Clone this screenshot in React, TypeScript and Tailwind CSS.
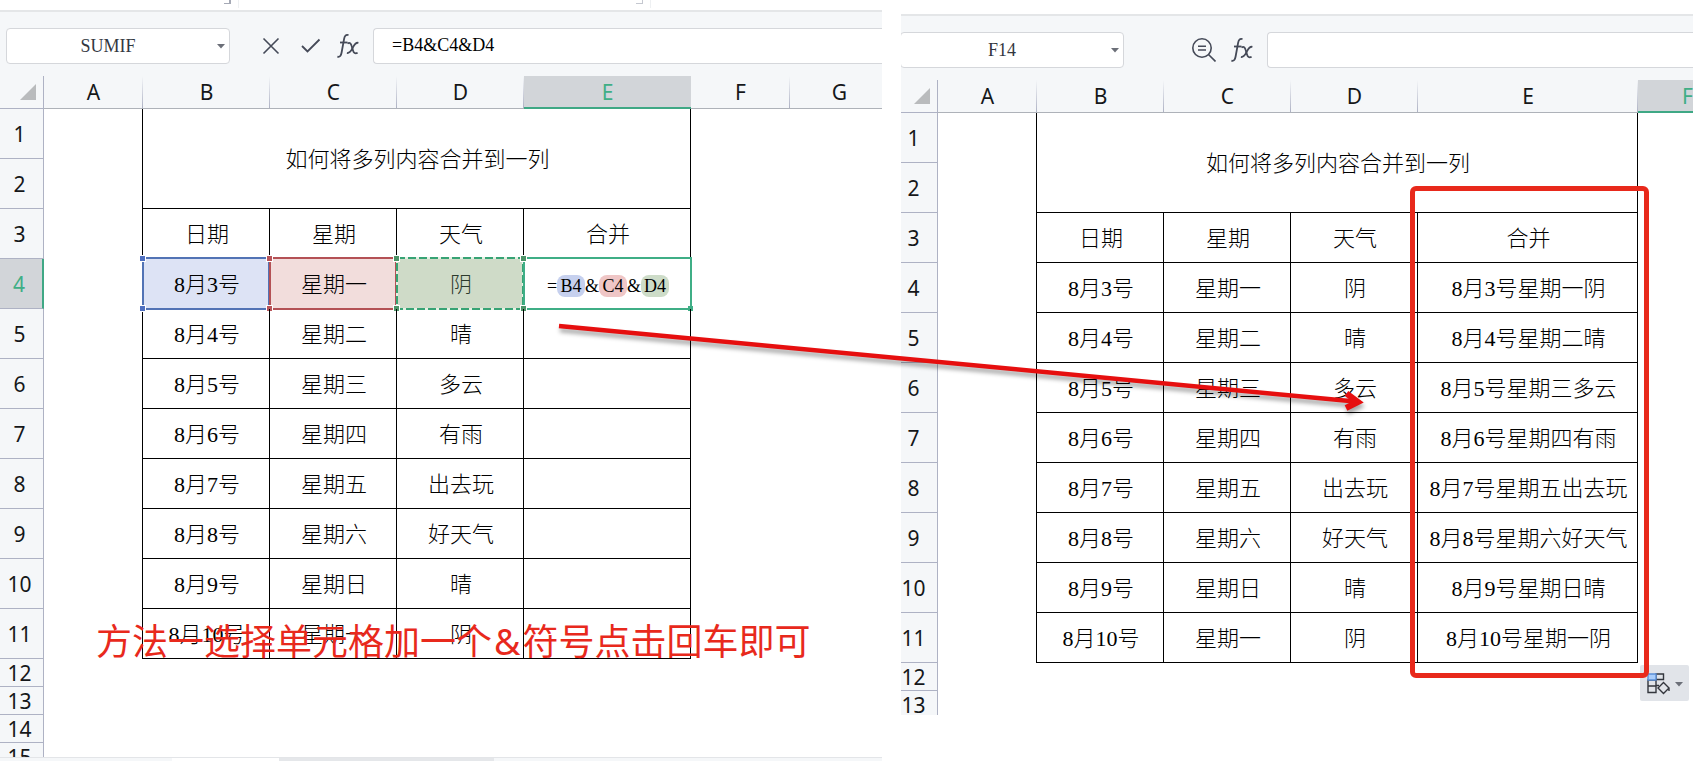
import type { ReactNode } from "react";

type Column = { id: string; width: number };

const LEFT_COLUMNS: Column[] = [
  { id: "A", width: 99 },
  { id: "B", width: 127 },
  { id: "C", width: 127 },
  { id: "D", width: 127 },
  { id: "E", width: 167 },
  { id: "F", width: 99 },
  { id: "G", width: 99 },
];

const RIGHT_COLUMNS: Column[] = [
  { id: "A", width: 99 },
  { id: "B", width: 127 },
  { id: "C", width: 127 },
  { id: "D", width: 127 },
  { id: "E", width: 220 },
  { id: "F", width: 99 },
];

const TITLE = "如何将多列内容合并到一列";
const HEADINGS = ["日期", "星期", "天气", "合并"];

const DAYS = [
  ["8月3号", "星期一", "阴"],
  ["8月4号", "星期二", "晴"],
  ["8月5号", "星期三", "多云"],
  ["8月6号", "星期四", "有雨"],
  ["8月7号", "星期五", "出去玩"],
  ["8月8号", "星期六", "好天气"],
  ["8月9号", "星期日", "晴"],
  ["8月10号", "星期一", "阴"],
];

const UI_FONT = "font-['Noto_Sans','Noto_Sans_CJK_SC',sans-serif]";
const CELL_FONT = "font-['Liberation_Serif','Noto_Sans_CJK_SC',serif] font-light";
const CELL = "relative border-r border-b border-black p-0 pt-0.5 pl-0.5 text-center";
const ROW_HEAD = "border-r p-0 pr-1 text-[21px] font-normal";

function Caret() {
  return (
    <svg viewBox="0 0 8 5" className="h-[5px] w-2" aria-hidden="true">
      <path d="M0 0h8L4 4.5z" fill="#6b6f78" />
    </svg>
  );
}

function CancelIcon() {
  return (
    <svg viewBox="0 0 24 24" className="size-6" fill="none" stroke="#454a58" strokeWidth="1.6">
      <path d="M4.5 4.5 19.5 19.5M19.5 4.5 4.5 19.5" />
    </svg>
  );
}

function AcceptIcon() {
  return (
    <svg viewBox="0 0 24 24" className="size-6" fill="none" stroke="#454a58" strokeWidth="1.8">
      <path d="M4 12 9.500 17.500 21.500 5.500" />
    </svg>
  );
}

function LookupIcon() {
  return (
    <svg viewBox="0 0 24 24" className="size-6" fill="none" stroke="#454a58" strokeWidth="1.6">
      <circle cx="10" cy="10" r="9.2" />
      <path d="M16.5 16.5 23.5 23.5M6 8.200h8M6 12h8" />
    </svg>
  );
}

function FunctionIcon() {
  return (
    <svg viewBox="0 0 22 24" className="h-6 w-[22px]" fill="none" stroke="#454a58" strokeWidth="1.8">
      <path d="M11.500 1.200C8.800.3 7.600 2 7.100 4.800L4.600 18.500C4.100 21.500 3 23.400.4 22.600" />
      <path d="M3 8.500h7.500" />
      <path d="M10.500 9.600c2.300-1.500 3.400-.3 4.100 2.200l1.400 4.600c.8 2.600 2.100 3.700 4.600 2.400" />
      <path d="M21.400 8.800c-3-.6-4.200 2-5.600 4.800-1.500 3-2.700 5.900-5.900 5.400" />
    </svg>
  );
}

function PasteOptionsIcon() {
  return (
    <svg viewBox="0 0 24 22" className="h-[22px] w-6" fill="none" stroke="#33363d" strokeWidth="1.4">
      <path d="M9 1h7.500v5.500H9zM1 7h8v6H1zM1 13h8v6.500H1zM9 12.500h3" />
      <path d="M1 1h8v6H1z" fill="#a9cdfb" stroke="#5b8fd6" />
      <path d="M16.500 9.500 22 15l-5.500 5.500L11 15zM22 15v3" fill="#e1e4e9" />
    </svg>
  );
}

function Toolbar({ name, formula, children }: { name: string; formula: string; children: ReactNode }) {
  return (
    <div className="flex border-t-2 border-[#e4e6e8] bg-[#f5f7f9] pt-4 pb-3 pl-1.5">
      <div className="flex h-9 w-56 shrink-0 items-center rounded border border-[#d5d7db] bg-white pr-1">
        <input
          aria-label="名称框"
          defaultValue={name}
          className="w-full min-w-0 bg-transparent pr-2 text-center font-['Liberation_Serif',serif] text-lg text-[#33373f] outline-none"
        />
        <button type="button" aria-label="选择名称" className="shrink-0">
          <Caret />
        </button>
      </div>
      <div className="flex w-[143px] shrink-0 items-center justify-end gap-[15px] pr-3.5">
        {children}
        <button type="button" aria-label="插入函数">
          <FunctionIcon />
        </button>
      </div>
      <input
        aria-label="编辑栏"
        defaultValue={formula}
        className="h-9 min-w-0 flex-1 rounded-l border border-r-0 border-[#d5d7db] bg-white pb-0.5 pl-[18px] font-['Liberation_Serif',serif] text-lg text-black outline-none"
      />
    </div>
  );
}

function HeaderRow({ columns, active }: { columns: Column[]; active: string }) {
  return (
    <tr className="h-[33px]">
      <th className="border-r border-b border-[#aeb2c4] bg-[#f5f7f9] p-0">
        <svg viewBox="0 0 16 16" className="ml-5 size-4" aria-label="全选">
          <path d="M16 0v16H0z" fill="#b9bbbd" />
        </svg>
      </th>
      {columns.map((col) => (
        <th
          key={col.id}
          scope="col"
          className={
            col.id === active
              ? "border-b-2 border-[#3fa885] bg-[#d2d5d9] p-0 text-[21px] leading-6 font-normal text-[#3fae86]"
              : "border-b border-[#aeb2b9] bg-[#f5f7f9] bg-linear-to-t from-[#aeb2c4] to-[#f5f7f9] bg-size-[1px_100%] bg-right bg-no-repeat p-0 text-[21px] leading-6 font-normal text-[#15171a]"
          }
        >
          {col.id}
        </th>
      ))}
    </tr>
  );
}

function RowHead({ n, active }: { n: number; active?: boolean }) {
  return (
    <th
      scope="row"
      className={
        active
          ? `${ROW_HEAD} ${UI_FONT} border-r-2 border-b border-r-[#3fa885] border-b-[#aeb2c4] bg-[#d2d5d9] leading-6 text-[#3fae86]`
          : `${ROW_HEAD} ${UI_FONT} border-b border-[#aeb2c4] bg-[#f5f7f9] leading-6 text-[#15171a]`
      }
    >
      {n}
    </th>
  );
}

// Last visible row, cut off by the bottom of the window
function CutRow({ n, height }: { n: number; height: number }) {
  return (
    <tr>
      <th scope="row" className={`${ROW_HEAD} ${UI_FONT} border-[#aeb2c4] bg-[#f5f7f9] leading-7 text-[#15171a]`}>
        <div className="overflow-hidden" style={{ height }}>
          {n}
        </div>
      </th>
    </tr>
  );
}

function Handles({ color }: { color: string }) {
  const dot = `absolute size-[7px] border border-white ${color}`;
  return (
    <span className="absolute -top-0.5 -bottom-0.5 -left-[128px] w-[127px]">
      <span className={`${dot} -top-0.5 -left-[3px]`} />
      <span className={`${dot} -top-0.5 -right-1`} />
      <span className={`${dot} -bottom-0.5 -left-[3px]`} />
      <span className={`${dot} -right-1 -bottom-0.5`} />
    </span>
  );
}

// Row 4 of the left sheet, while its formula is being edited
function EditingCells() {
  const [date, week, weather] = DAYS[0];
  return (
    <>
      <td className={`${CELL} bg-[#dde3f5]`}>
        {date}
        <span className="absolute -top-0.5 -right-px -bottom-0.5 -left-px border-2 border-[#5273b5]" />
      </td>
      <td className={`${CELL} bg-[#f2dddc]`}>
        {week}
        <span className="absolute -top-0.5 -right-px -bottom-0.5 -left-px border-2 border-[#b45155]" />
        <Handles color="bg-[#4f6fc0]" />
      </td>
      <td className={`${CELL} bg-[#cfdbc8] text-[#2c3a2c]`}>
        {weather}
        <span className="absolute -top-0.5 -right-px -bottom-0.5 -left-px">
          <svg viewBox="0 0 128 53" className="block size-full" fill="none" strokeWidth="2">
            <rect x="1" y="1" width="126" height="51" stroke="#e6f0e4" />
            <rect x="1" y="1" width="126" height="51" stroke="#37a374" strokeDasharray="8 3" />
          </svg>
        </span>
        <Handles color="bg-[#b9555a]" />
      </td>
      <td className={CELL}>
        <span className="inline-flex items-center text-lg leading-[22px] font-normal">
          =<span className="w-7 rounded-lg bg-[#c6d0ee]">B4</span>&amp;
          <span className="w-7 rounded-lg bg-[#efc6c6]">C4</span>&amp;
          <span className="w-7 rounded-lg bg-[#cddcc8]">D4</span>
        </span>
        <span className="absolute -top-0.5 -right-0.5 -bottom-0.5 -left-px border-2 border-[#3fae86]" />
        <span className="absolute -right-[3px] -bottom-[3px] size-[5px] bg-[#3fae86]" />
        <Handles color="bg-[#4d9468]" />
      </td>
    </>
  );
}

function Sheet({
  columns,
  active,
  merged,
  tail,
  cut,
}: {
  columns: Column[];
  active: string;
  merged: boolean;
  tail: number[];
  cut: ReactNode;
}) {
  const width = columns.reduce((sum, col) => sum + col.width, 44);
  return (
    <table className={`table-fixed border-separate border-spacing-0 ${UI_FONT}`} style={{ width }}>
      <colgroup>
        <col style={{ width: 44 }} />
        {columns.map((col) => (
          <col key={col.id} style={{ width: col.width }} />
        ))}
      </colgroup>
      <thead>
        <HeaderRow columns={columns} active={active} />
      </thead>
      <tbody className={`text-[22px] leading-8 text-black ${CELL_FONT}`}>
        <tr className="h-[50px]">
          <RowHead n={1} />
          <td rowSpan={2} className="border-r border-black" />
          <td colSpan={4} rowSpan={2} className={CELL}>
            {TITLE}
          </td>
        </tr>
        <tr className="h-[50px]">
          <RowHead n={2} />
        </tr>
        <tr className="h-[50px]">
          <RowHead n={3} />
          <td className="border-r border-black" />
          {HEADINGS.map((h) => (
            <td key={h} className={CELL}>
              {h}
            </td>
          ))}
        </tr>
        {DAYS.map((day, i) => {
          const editing = !merged && i === 0;
          return (
            <tr key={day[0]} className="h-[50px]">
              <RowHead n={i + 4} active={editing} />
              <td className="border-r border-black" />
              {editing ? (
                <EditingCells />
              ) : (
                <>
                  {day.map((text) => (
                    <td key={text} className={CELL}>
                      {text}
                    </td>
                  ))}
                  <td className={CELL}>{merged ? day.join("") : null}</td>
                </>
              )}
            </tr>
          );
        })}
        {tail.map((n) => (
          <tr key={n} className="h-7">
            <RowHead n={n} />
          </tr>
        ))}
        {cut}
      </tbody>
    </table>
  );
}

function Arrow() {
  return (
    <svg
      viewBox="0 0 812 96"
      className="pointer-events-none absolute top-[320px] left-[558px] h-24 w-[812px] drop-shadow-[1px_4px_2px_rgba(0,0,0,0.35)]"
      fill="none"
      stroke="#e60f0f"
      aria-hidden="true"
    >
      <path d="M1 6 797 81.5" strokeWidth="4.5" />
      <path d="M788.5 73.5 800 82 788 88" strokeWidth="6" />
    </svg>
  );
}

export default function App() {
  return (
    <main className={`relative grid grid-cols-[882fr_792fr] items-start gap-[19px] overflow-hidden bg-white ${UI_FONT}`}>
      <section className="relative min-w-0 overflow-hidden">
        <div className="flex h-2.5 items-start">
          <span className="ml-56 h-1 w-[7px] border-r-2 border-b border-[#a5a9b5]" />
          <span className="ml-[7px] h-2 w-px bg-[#eef0f2]" />
          <span className="ml-[397px] h-1 w-[7px] border-r border-b border-[#c5c8d0]" />
          <span className="ml-[7px] h-2 w-px bg-[#eef0f2]" />
        </div>
        <Toolbar name="SUMIF" formula="=B4&C4&D4">
          <button type="button" aria-label="取消">
            <CancelIcon />
          </button>
          <button type="button" aria-label="输入">
            <AcceptIcon />
          </button>
        </Toolbar>
        <Sheet
          columns={LEFT_COLUMNS}
          active="E"
          merged={false}
          tail={[12, 13, 14]}
          cut={<CutRow n={15} height={14} />}
        />
        <div className="flex h-[5px] border-t border-[#e3e5e8] bg-[#f5f7f9]">
          <span className="ml-[172px] w-[107px] bg-white" />
          <span className="w-[215px] bg-[#e5e7ea]" />
        </div>
        <p className="absolute top-[617px] left-24 font-['Noto_Sans_CJK_SC',sans-serif] text-4xl leading-[44px] whitespace-nowrap text-[#e8291c]">
          方法一选择单元格加一个
          <span className="px-0.5 font-['Noto_Sans',sans-serif] leading-none">&amp;</span>
          符号点击回车即可
        </p>
      </section>

      <section className="relative min-w-0 overflow-hidden">
        <div className="-ml-[7px] pt-3.5">
          <Toolbar name="F14" formula="">
            <button type="button" aria-label="查找">
              <LookupIcon />
            </button>
          </Toolbar>
          <Sheet
            columns={RIGHT_COLUMNS}
            active="F"
            merged
            tail={[12]}
            cut={<CutRow n={13} height={24} />}
          />
        </div>
        <button
          type="button"
          aria-label="粘贴选项"
          className="absolute top-[665px] left-[739px] flex h-9 w-[49px] items-center gap-1 rounded-xs bg-[#e1e4e9] pt-0.5 pl-[7px]"
        >
          <PasteOptionsIcon />
          <Caret />
        </button>
        <span className="absolute top-[186px] left-[509px] h-[492px] w-[239px] rounded-md border-[5px] border-[#e8291b]" />
      </section>

      <Arrow />
    </main>
  );
}
